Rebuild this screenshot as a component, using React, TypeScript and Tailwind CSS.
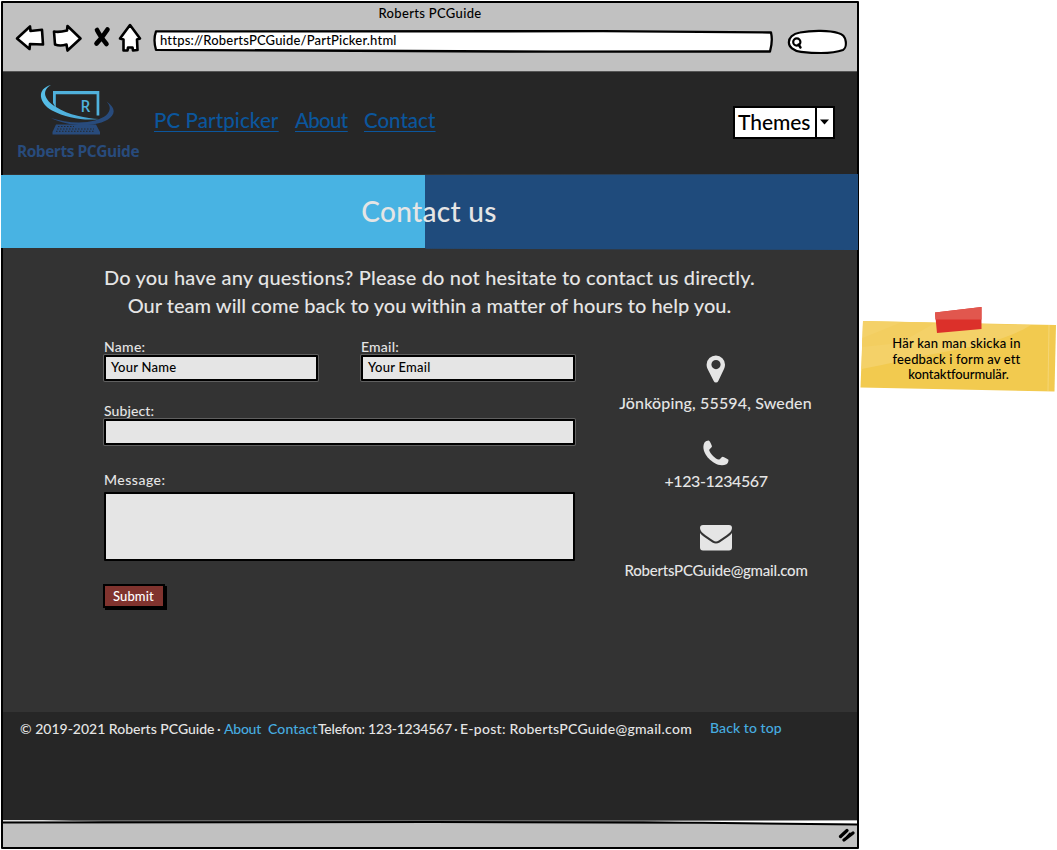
import type { ReactNode } from 'react'

const ink = { fill: '#fff', stroke: '#000', strokeWidth: 2.6, strokeLinejoin: 'round' as const, strokeLinecap: 'round' as const }

function BrowserBar() {
  return (
    <div className="h-[68px] shrink-0 bg-[#c1c1c1] text-[13px] text-black">
      <div className="h-[20px] pt-[2px] text-center leading-[17px] font-medium tracking-[0.33px]">Roberts PCGuide</div>
      <div className="flex h-[44px] items-start">
        <svg className="ml-[12px] h-[34px] w-[130px] shrink-0" viewBox="15 22 130 34">
          <path {...ink} d="M17 37.5 L30 25.5 L30.5 30 L42 28.8 L43 43.5 L30 43 L29.5 48 Z" />
          <path {...ink} d="M54 30.500 Q59 31.500 67 29.500 L67.5 25 L80.500 37.500 L67.500 49.5 L66.500 43.500 Q60 45.500 55 43.500 Z" />
          <path d="M97 29 Q100 35 106.500 43 M107.500 28.500 Q102 37 96.500 42.500" stroke="#000" strokeWidth="4.600" strokeLinecap="round" fill="none" />
          <path {...ink} d="M130 24 L140 37.500 L137 38.500 L137.500 49 L133 49.500 L132.500 46.500 L128 46.500 L127.500 49.500 L123.500 49.500 L123.500 38.500 L120 37.500 Z" />
        </svg>
        <div className="relative mt-[7px] ml-[8px] h-[23px] w-[620px] shrink-0 pt-[2px] pl-[7px] leading-[17px] font-medium tracking-[0.19px]">
          <svg className="absolute inset-0 h-[23px] w-[620px]" viewBox="0 0 620 23">
            <path {...ink} strokeWidth="2.300" d="M3 1.400 L450 1.200 L618 2.500 Q620 11 617 21.500 L400 21.700 L3 19.800 Q0 10 3 1.400 Z" />
          </svg>
          <span className="relative">https://RobertsPCGuide/PartPicker.html</span>
        </div>
        <svg className="mt-[5px] ml-[12px] h-[28px] w-[64px] shrink-0" viewBox="785 27 64 28">
          <path {...ink} strokeWidth="2.200" d="M800 31.500 C813 29 830 29.500 838 32 C848 34 847 47 843 49 C832 53 812 52 801 50.800 C785 49 785 34 800 31.500 Z" />
          <circle cx="796.800" cy="41" r="3.600" fill="none" stroke="#000" strokeWidth="2.200" />
          <path d="M798.500 43.500 L800.500 46.500" stroke="#000" strokeWidth="2.400" strokeLinecap="round" />
        </svg>
      </div>
    </div>
  )
}

function Logo() {
  return (
    <div className="flex w-[122px] flex-col items-center">
      <svg className="h-[54px] w-[84px]" viewBox="36 82 84 54">
        <defs>
          <linearGradient id="swoosh" x1="0" x2="1">
            <stop offset="0" stopColor="#57bfe8" />
            <stop offset="1" stopColor="#459fce" />
          </linearGradient>
        </defs>
        <path d="M53 103 V91 H99.300 V115.500 H96.600 V94.200 H55.800 V108 Z" fill="#50b1dc" />
        <path d="M51 85 C36 89 39 103 52 110.500 C66 118 85 121 99 119 C87 118.500 68 115 56 107 C43 99 42 90 51 85 Z" fill="url(#swoosh)" />
        <path d="M106.500 101.500 C121 111 112 121.500 93 124.500 C76 126.500 61 123 51 118 C64 122.500 82 124 95 120.500 C110 116.500 113 108 106.500 101.500 Z" fill="#284b7c" />
        <path d="M56 124.500 L96 124.500 L100 132 V134.500 H52.500 V132 Z" fill="#284b7c" />
        <path d="M58 126.500 H74 M57 129 H94 M56 131.300 H94" stroke="#262626" strokeWidth="0.900" strokeDasharray="1.500 1.500" />
        <text x="80.500" y="111.800" fontFamily="Open Sans, sans-serif" fontSize="16" fontWeight="600" fill="#50b1dc" textLength="9.800" lengthAdjust="spacingAndGlyphs">R</text>
      </svg>
      <div className="mt-[5px] font-['Open_Sans',sans-serif] text-[15.500px] leading-[20px] font-bold tracking-[-0.45px] whitespace-nowrap text-[#284b7c]">Roberts PCGuide</div>
    </div>
  )
}

function SiteHeader() {
  return (
    <header className="flex h-[103px] shrink-0 items-start border-t border-[#555] bg-[#262626]">
      <div className="mt-[10px] ml-[14px]">
        <Logo />
      </div>
      <nav className="mt-[35px] ml-[15px] flex text-[20.500px] leading-[26px] font-medium whitespace-nowrap text-[#0b569d] underline decoration-1 underline-offset-[3px]">
        <a className="w-[141px] tracking-[0.1px]">PC Partpicker</a>
        <a className="w-[69px] tracking-[-0.7px]">About</a>
        <a className="tracking-[0px]">Contact</a>
      </nav>
      <div className="mt-[34px] mr-[22px] ml-auto flex h-[33px] w-[102px] border-[2.500px] border-black bg-white text-black">
        <div className="flex w-[82px] items-center border-r-2 border-black pb-[2px] pl-[3px] text-[21px] leading-none font-medium tracking-[-0.05px]">Themes</div>
        <svg className="mt-[11px] ml-[3px] h-[6px] w-[9px]" viewBox="0 0 9 6">
          <path d="M0 0.500 H9 L4.500 5.500 Z" />
        </svg>
      </div>
    </header>
  )
}

function Field({ label, className, value, box }: { label: ReactNode; className: string; value?: string; box: string }) {
  return (
    <label className={className}>
      <span className="block h-[17px] text-[14px] leading-[17px]">{label}</span>
      <span className={box}>{value}</span>
    </label>
  )
}

const inputBox =
  'block h-[26px] rounded-[1px] border-[2.5px] border-black bg-[#e5e5e5] pl-[5px] text-[13px] leading-[20px] font-medium tracking-[0.25px] text-black shadow-[0_0_0_1px_#8888]'

function ContactForm() {
  return (
    <form className="w-[471px] font-medium text-[#e5e5e5]">
      <div className="flex gap-[43px]">
        <Field className="w-[214px]" label={<span className="tracking-[0.28px]">Name:</span>} value="Your Name" box={inputBox} />
        <Field className="w-[214px]" label={<span className="tracking-[0.2px]">Email:</span>} value="Your Email" box={inputBox} />
      </div>
      <Field className="mt-[21px] block" label={<span className="tracking-[0.1px]">Subject:</span>} box={inputBox} />
      <label className="mt-[26px] block">
        <span className="block h-[21px] text-[14px] leading-[17px] tracking-[0.5px]">Message:</span>
        <span className="block h-[69px] rounded-[1px] border-[2.5px] border-black bg-[#e5e5e5]" />
      </label>
      <div className="mt-[23px] -ml-px h-[24px] w-[62px] border-[2.5px] border-black bg-[#80332e] pl-[8px] text-[13px] leading-[20px] tracking-[0.1px] text-white shadow-[2px_2px_0_#000]">Submit</div>
    </form>
  )
}

function ContactDetails() {
  return (
    <aside className="flex w-[200px] flex-col items-center font-medium whitespace-nowrap text-[#e5e5e5]">
      <svg className="mt-[17px] h-[28px] w-[20px]" viewBox="0 0 20 28" fill="#e5e5e5">
        <path fillRule="evenodd" d="M10 0.500 A9 9 0 0 1 19 9.500 C19 11.500 18.600 12.700 18 14 L12.300 26 A2.500 2.500 0 0 1 7.700 26 L1.600 14 C1 12.700 0.600 11.500 0.600 9.500 A9.200 9.200 0 0 1 10 0.500 Z M10 5 A4.600 4.600 0 1 0 10 14.200 A4.600 4.600 0 1 0 10 5 Z" />
      </svg>
      <div className="mt-[9px] pr-px text-[16px] leading-[22px] tracking-[0.14px]">Jönköping, 55594, Sweden</div>
      <svg className="mt-[26px] h-[26px] w-[26px]" viewBox="0 0 26 26" fill="#e5e5e5">
        <path d="M25.500 20 C25.500 21.500 24.800 23.500 23.500 24.200 C17 27.500 9.500 22.500 5.800 18.500 C2 14.300 -1.500 7.800 1.500 2.500 C2.300 1.200 4.300 0.500 5.600 0.500 C6.700 0.500 8.800 5.200 9 6.200 C9.200 7.700 6 9 6.200 10.200 C7 13.500 12.500 19 15.800 19.600 C17.100 19.800 18.300 16.600 19.800 16.800 C20.800 17 25.500 19.300 25.500 20 Z" />
      </svg>
      <div className="mt-[4px] text-[16px] leading-[22px] tracking-[-0.42px]">+123-1234567</div>
      <svg className="mt-[33px] h-[26px] w-[32px]" viewBox="0 0 32 26" fill="#e5e5e5">
        <path d="M3 0 H29 Q32 0 32 3 C32 5.800 29.500 8.200 26.500 10.200 L18.800 15.500 Q16 17.300 13.200 15.500 L5.500 10.200 C2.500 8.200 0 5.800 0 3 Q0 0 3 0 Z" />
        <path d="M0 8 Q1.500 10 4 11.700 L12.400 17.400 Q16 19.700 19.600 17.400 L28 11.700 Q30.500 10 32 8 V22.500 Q32 25.500 29 25.500 H3 Q0 25.500 0 22.500 Z" />
      </svg>
      <div className="mt-[9px] text-[15px] leading-[20px] tracking-[-0.21px]">RobertsPCGuide@gmail.com</div>
    </aside>
  )
}

function SiteFooter() {
  return (
    <footer className="h-[108px] shrink-0 bg-[#262626] pt-[8px] pl-[17px] font-medium text-[#e5e5e5]">
      <div className="flex text-[14px] leading-[18px] whitespace-pre">
        <span className="w-[197px]">© 2019-2021 Roberts PCGuide</span>
        <span className="w-[7px]">·</span>
        <a className="w-[44px] tracking-[-0.25px] text-[#46ade0]">About</a>
        <a className="w-[50px] tracking-[0.12px] text-[#46ade0]">Contact</a>
        <span className="w-[136px] tracking-[-0.24px]">Telefon: 123-1234567</span>
        <span className="w-[6px]">·</span>
        <span className="w-[250px] tracking-[0.28px]">E-post: RobertsPCGuide@gmail.com</span>
        <a className="-mt-px tracking-[0.08px] text-[#46ade0]">Back to top</a>
      </div>
    </footer>
  )
}

function StatusBar() {
  return (
    <div className="shrink-0 bg-[#c1c1c1]">
      <svg className="block h-[6px] w-[854px]" viewBox="0 0 854 6">
        <path d="M0 0 H60 L300 2 H0 Z" fill="#ddd" />
        <path d="M40 0 H854 V4 L700 2 L100 2 Z" fill="#666" />
        <path d="M640 1 L854 0.500 V4 L700 2.500 Z" fill="#fff" />
        <path d="M0 2.500 L430 2 L700 2.800 L854 4.500" fill="none" stroke="#000" strokeWidth="2" />
      </svg>
      <div className="flex h-[21px] items-center justify-end pr-[2px] pb-[3px]">
        <svg className="h-[14px] w-[17px]" viewBox="0 0 17 14" fill="none" stroke="#000" strokeWidth="3.200" strokeLinecap="round">
          <path d="M2.500 8.500 L9 2.500 M6 12 L15 5" />
          <path d="M2.500 9 L6 4.800 M9 9 L12 5.500" strokeWidth="2" />
        </svg>
      </div>
    </div>
  )
}

function StickyNote() {
  return (
    <div className="relative mt-[321px] ml-[1px] h-[72px] w-[197px] shrink-0 pt-[15px] text-center text-[13px] leading-[15.500px] font-medium whitespace-nowrap text-black">
      <svg className="absolute -top-[14px] left-0 h-[86px] w-[197px]" viewBox="860 307 197 86">
        <path d="M863 321 L1056 325 L1054.500 391.500 L860.500 387.500 Z" fill="#f2ca4f" />
        <path d="M863 321 L1031 325 C1008 339 981 345 944 352 C915 357 889 364 861.500 369 Z" fill="#f4d168" />
        <path d="M902 322 L935 323 L900 343 L862 347 L862.500 338 Z" fill="#f3ce60" />
        <path d="M1049 325 L1048 391" stroke="#f6da85" strokeWidth="0.700" />
        <path d="M935 312.500 L981.500 307 L981.500 329 L937 333 Z" fill="#dc302a" />
        <path d="M935 312.500 L981.500 307 V319.500 H935.300 Z" fill="#e1574e" />
      </svg>
      <div className="relative pr-[4px]">
        <div className="tracking-[0.2px]">Här kan man skicka in</div>
        <div className="tracking-[0.14px]">feedback i form av ett</div>
        <div className="pl-[4px] tracking-[-0.1px]">kontaktfourmulär.</div>
      </div>
    </div>
  )
}

export default function App() {
  return (
    <div className="flex h-[850px] w-[1057px] items-start overflow-hidden bg-white font-[Lato,sans-serif]">
      <div className="mt-px ml-px flex h-[848px] w-[858px] shrink-0 flex-col rounded-[1px] border-2 border-black bg-[#333]">
        <BrowserBar />
        <SiteHeader />
        <div className="-mx-[2px] flex h-[76px] shrink-0 items-center justify-center bg-[linear-gradient(90deg,#48b3e3_424.5px,#1f4b7c_424.5px)] pr-[2px] pb-[3px] text-[28px] font-medium tracking-[0.3px] text-[#e5e5e5] [clip-path:polygon(0_1px,424px_1px,857px_0,857px_100%,424.5px_98.5%,424.5px_74px,0_74px)]">
          Contact us
        </div>
        <main className="flex-1 pt-[13px]">
          <div className="pr-px text-center text-[20px] leading-[28px] font-medium whitespace-nowrap text-[#e5e5e5]">
            <p className="tracking-[0.17px]">Do you have any questions? Please do not hesitate to contact us directly.</p>
            <p className="tracking-[0.02px]">Our team will come back to you within a matter of hours to help you.</p>
          </div>
          <div className="mt-[19px] flex pl-[101px]">
            <ContactForm />
            <div className="ml-[41px]">
              <ContactDetails />
            </div>
          </div>
        </main>
        <SiteFooter />
        <StatusBar />
      </div>
      <StickyNote />
    </div>
  )
}
